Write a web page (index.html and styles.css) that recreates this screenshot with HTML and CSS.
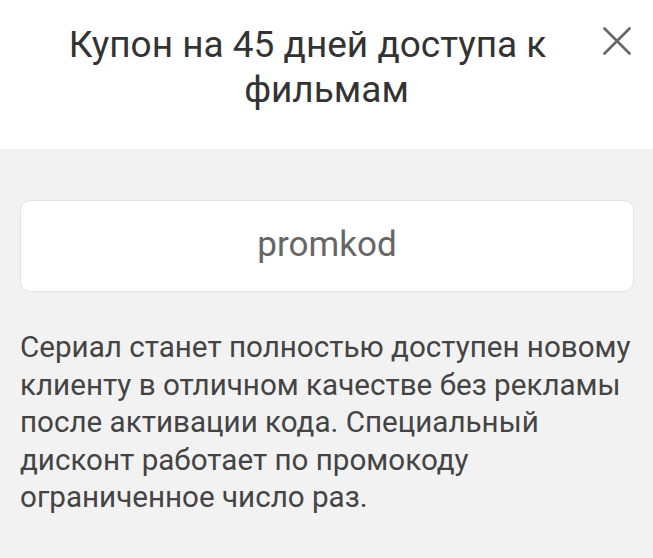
FILE: index.html
```html
<!DOCTYPE html>
<html lang="ru">
<head>
<meta charset="utf-8">
<link rel="stylesheet" href="styles.css">
</head>
<body>
<div class="modal">
  <header class="head">
    <h1 class="title"><span class="line first">Купон на 45 дней доступа к</span> <span class="line">фильмам</span></h1>
    <button class="close" aria-label="Закрыть">
      <svg width="28" height="28" viewBox="0 0 28 28"><path d="M1.5 1.5 L26.5 26.5 M26.5 1.5 L1.5 26.5" stroke="#666" stroke-width="2.6" stroke-linecap="round" fill="none"/></svg>
    </button>
  </header>
  <main class="body">
    <div class="field">promkod</div>
    <p class="desc">Сериал станет полностью доступен новому клиенту в отличном качестве без рекламы после активации кода. Специальный дисконт работает по промокоду ограниченное число раз.</p>
  </main>
</div>
</body>
</html>
```
FILE: styles.css
```css
html, body { margin: 0; padding: 0; }
body { background: #f2f2f2; font-family: Roboto, "Liberation Sans", sans-serif; }
.modal { width: 653px; height: 558px; display: flex; flex-direction: column; }
.head { background: #fff; height: 149px; box-sizing: border-box; padding: 22px 0 0; }
.title { margin: 0; font-weight: 400; font-size: 37px; line-height: 45px; color: #333; text-align: center; }
.line { display: block; }
.line.first { padding-right: 38px; }
.close { position: absolute; left: 603px; top: 27px; width: 28px; height: 28px; padding: 0; border: 0; background: none; display: block; }
.close svg { display: block; }
.body { flex: 1; background: #f2f2f2; padding: 51px 19px 0 20px; }
.field { background: #fff; border: 1px solid #e2e2e2; border-radius: 10px; display: flex; align-items: center; justify-content: center; font-size: 35px; color: #666; padding-bottom: 4px; box-sizing: border-box; height: 92px; }
.desc { margin: 37px 0 0; font-size: 29.6px; line-height: 37.5px; color: #444; }
```
